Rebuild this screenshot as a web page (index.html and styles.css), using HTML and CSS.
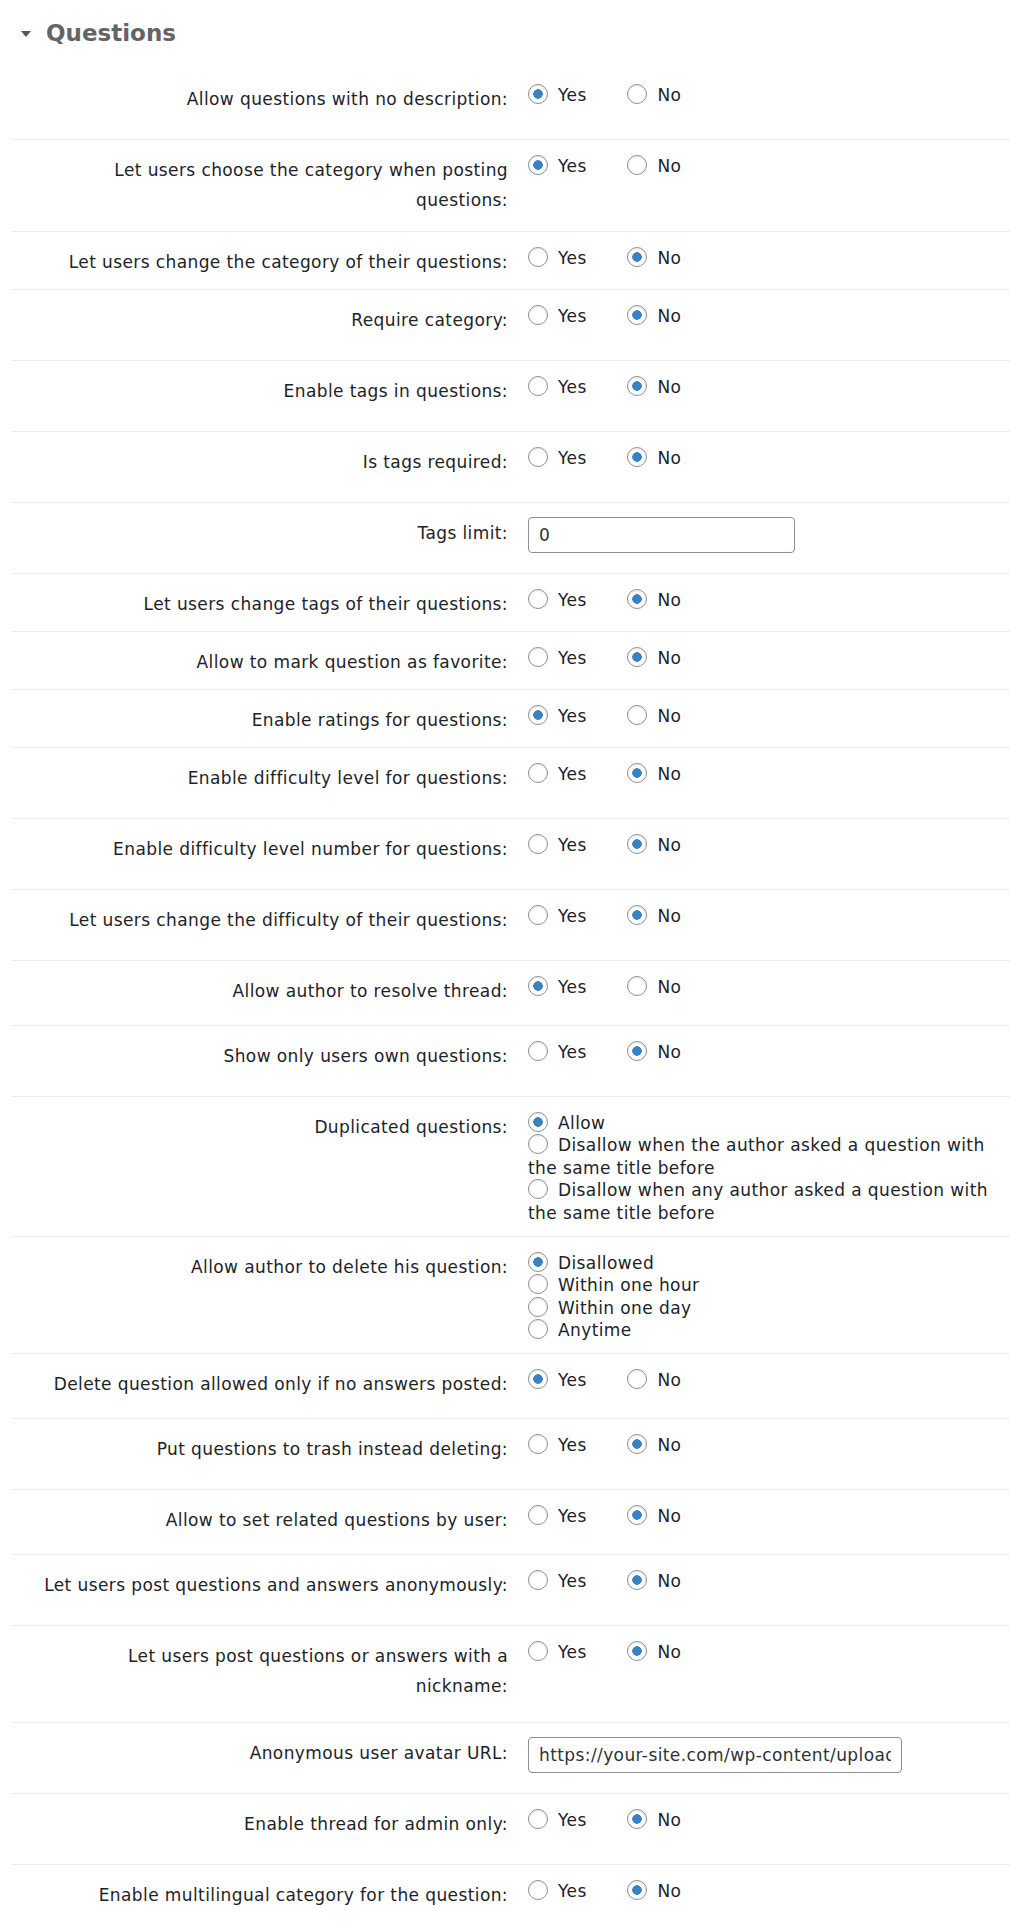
FILE: index.html
```html
<!DOCTYPE html>
<html lang="en">
<head>
    <meta charset="UTF-8">
    <title>Questions - Settings</title>
    <link rel="stylesheet" href="styles.css">
</head>
<body>
    <div class="section-title">
        <span class="toggle-arrow"></span>
        <h2>Questions</h2>
    </div>

    <div class="settings">
        <!-- Posting -->
        <div class="form-row">
            <label class="field-label">Allow questions with no description:</label>
            <div class="field-value">
                <label class="choice"><input type="radio" name="no_desc" checked>Yes</label>
                <label class="choice"><input type="radio" name="no_desc">No</label>
            </div>
        </div>
        <div class="form-row row-wrap">
            <label class="field-label">Let users choose the category when posting questions:</label>
            <div class="field-value">
                <label class="choice"><input type="radio" name="choose_cat" checked>Yes</label>
                <label class="choice"><input type="radio" name="choose_cat">No</label>
            </div>
        </div>
        <div class="form-row row-sm">
            <label class="field-label">Let users change the category of their questions:</label>
            <div class="field-value">
                <label class="choice"><input type="radio" name="change_cat">Yes</label>
                <label class="choice"><input type="radio" name="change_cat" checked>No</label>
            </div>
        </div>
        <div class="form-row">
            <label class="field-label">Require category:</label>
            <div class="field-value">
                <label class="choice"><input type="radio" name="req_cat">Yes</label>
                <label class="choice"><input type="radio" name="req_cat" checked>No</label>
            </div>
        </div>

        <!-- Tags -->
        <div class="form-row">
            <label class="field-label">Enable tags in questions:</label>
            <div class="field-value">
                <label class="choice"><input type="radio" name="tags">Yes</label>
                <label class="choice"><input type="radio" name="tags" checked>No</label>
            </div>
        </div>
        <div class="form-row">
            <label class="field-label">Is tags required:</label>
            <div class="field-value">
                <label class="choice"><input type="radio" name="tags_req">Yes</label>
                <label class="choice"><input type="radio" name="tags_req" checked>No</label>
            </div>
        </div>
        <div class="form-row">
            <label class="field-label" for="tags-limit">Tags limit:</label>
            <div class="field-value">
                <input type="text" id="tags-limit" class="text-input input-short" value="0">
            </div>
        </div>
        <div class="form-row row-sm">
            <label class="field-label">Let users change tags of their questions:</label>
            <div class="field-value">
                <label class="choice"><input type="radio" name="change_tags">Yes</label>
                <label class="choice"><input type="radio" name="change_tags" checked>No</label>
            </div>
        </div>

        <!-- Favorites, ratings, difficulty -->
        <div class="form-row row-sm">
            <label class="field-label">Allow to mark question as favorite:</label>
            <div class="field-value">
                <label class="choice"><input type="radio" name="favorite">Yes</label>
                <label class="choice"><input type="radio" name="favorite" checked>No</label>
            </div>
        </div>
        <div class="form-row row-sm">
            <label class="field-label">Enable ratings for questions:</label>
            <div class="field-value">
                <label class="choice"><input type="radio" name="ratings" checked>Yes</label>
                <label class="choice"><input type="radio" name="ratings">No</label>
            </div>
        </div>
        <div class="form-row">
            <label class="field-label">Enable difficulty level for questions:</label>
            <div class="field-value">
                <label class="choice"><input type="radio" name="difficulty">Yes</label>
                <label class="choice"><input type="radio" name="difficulty" checked>No</label>
            </div>
        </div>
        <div class="form-row">
            <label class="field-label">Enable difficulty level number for questions:</label>
            <div class="field-value">
                <label class="choice"><input type="radio" name="difficulty_num">Yes</label>
                <label class="choice"><input type="radio" name="difficulty_num" checked>No</label>
            </div>
        </div>
        <div class="form-row">
            <label class="field-label">Let users change the difficulty of their questions:</label>
            <div class="field-value">
                <label class="choice"><input type="radio" name="change_difficulty">Yes</label>
                <label class="choice"><input type="radio" name="change_difficulty" checked>No</label>
            </div>
        </div>
        <div class="form-row row-md">
            <label class="field-label">Allow author to resolve thread:</label>
            <div class="field-value">
                <label class="choice"><input type="radio" name="resolve" checked>Yes</label>
                <label class="choice"><input type="radio" name="resolve">No</label>
            </div>
        </div>
        <div class="form-row">
            <label class="field-label">Show only users own questions:</label>
            <div class="field-value">
                <label class="choice"><input type="radio" name="own_only">Yes</label>
                <label class="choice"><input type="radio" name="own_only" checked>No</label>
            </div>
        </div>

        <!-- Duplicates / deleting -->
        <div class="form-row row-list3">
            <label class="field-label">Duplicated questions:</label>
            <div class="field-value choice-list">
                <label><input type="radio" name="duplicates" checked>Allow</label>
                <label><input type="radio" name="duplicates">Disallow when the author asked a question with the same title before</label>
                <label><input type="radio" name="duplicates">Disallow when any author asked a question with the same title before</label>
            </div>
        </div>
        <div class="form-row row-list4">
            <label class="field-label">Allow author to delete his question:</label>
            <div class="field-value choice-list">
                <label><input type="radio" name="delete_own" checked>Disallowed</label>
                <label><input type="radio" name="delete_own">Within one hour</label>
                <label><input type="radio" name="delete_own">Within one day</label>
                <label><input type="radio" name="delete_own">Anytime</label>
            </div>
        </div>
        <div class="form-row row-md">
            <label class="field-label">Delete question allowed only if no answers posted:</label>
            <div class="field-value">
                <label class="choice"><input type="radio" name="delete_no_answers" checked>Yes</label>
                <label class="choice"><input type="radio" name="delete_no_answers">No</label>
            </div>
        </div>
        <div class="form-row">
            <label class="field-label">Put questions to trash instead deleting:</label>
            <div class="field-value">
                <label class="choice"><input type="radio" name="trash">Yes</label>
                <label class="choice"><input type="radio" name="trash" checked>No</label>
            </div>
        </div>
        <div class="form-row row-md">
            <label class="field-label">Allow to set related questions by user:</label>
            <div class="field-value">
                <label class="choice"><input type="radio" name="related">Yes</label>
                <label class="choice"><input type="radio" name="related" checked>No</label>
            </div>
        </div>

        <!-- Anonymous posting -->
        <div class="form-row">
            <label class="field-label">Let users post questions and answers anonymously:</label>
            <div class="field-value">
                <label class="choice"><input type="radio" name="anonymous">Yes</label>
                <label class="choice"><input type="radio" name="anonymous" checked>No</label>
            </div>
        </div>
        <div class="form-row row-wrap-lg">
            <label class="field-label">Let users post questions or answers with a nickname:</label>
            <div class="field-value">
                <label class="choice"><input type="radio" name="nickname">Yes</label>
                <label class="choice"><input type="radio" name="nickname" checked>No</label>
            </div>
        </div>
        <div class="form-row">
            <label class="field-label" for="avatar-url">Anonymous user avatar URL:</label>
            <div class="field-value">
                <input type="text" id="avatar-url" class="text-input input-long" value="https://your-site.com/wp-content/uploads/anonymous-avatar.png">
            </div>
        </div>
        <div class="form-row">
            <label class="field-label">Enable thread for admin only:</label>
            <div class="field-value">
                <label class="choice"><input type="radio" name="admin_only">Yes</label>
                <label class="choice"><input type="radio" name="admin_only" checked>No</label>
            </div>
        </div>
        <div class="form-row">
            <label class="field-label">Enable multilingual category for the question:</label>
            <div class="field-value">
                <label class="choice"><input type="radio" name="multilingual">Yes</label>
                <label class="choice"><input type="radio" name="multilingual" checked>No</label>
            </div>
        </div>
    </div>
</body>
</html>
```

FILE: styles.css
```css
/* General */
body {
    margin: 0;
    padding: 0;
    font-family: "DejaVu Sans", Verdana, sans-serif;
    font-size: 17px;
    letter-spacing: 0.4px;
    color: #1d2327;
    background: #fff;
}

/* Section heading */
.section-title {
    display: flex;
    align-items: center;
    gap: 15px;
    margin: 18px 0 21px 21px;
    height: 30px;
    letter-spacing: 0;
}

.toggle-arrow {
    width: 0;
    height: 0;
    border-left: 5px solid transparent;
    border-right: 5px solid transparent;
    border-top: 6px solid #555;
    margin-top: 1px;
}

.section-title h2 {
    margin: 0;
    font-size: 23px;
    line-height: 30px;
    font-weight: bold;
    color: #646464;
}

/* Settings table */
.settings {
    margin-left: 12px;
}

.form-row {
    display: grid;
    grid-template-columns: 496px 1fr;
    box-sizing: border-box;
    min-height: 71px;
    border-bottom: 1px solid #ececec;
}

.row-sm { min-height: 58px; }
.row-md { min-height: 65px; }
.row-wrap { min-height: 92px; }
.row-wrap-lg { min-height: 97px; }
.row-list3 { min-height: 140px; }
.row-list4 { min-height: 117px; }

.field-label {
    box-sizing: border-box;
    padding: 15px 0 0 31px;
    text-align: right;
    line-height: 30px;
}

.field-value {
    padding: 15px 10px 0 20px;
    line-height: 22.4px;
}

/* Radios */
input[type="radio"] {
    -webkit-appearance: none;
    appearance: none;
    box-sizing: border-box;
    display: inline-block;
    width: 20px;
    height: 20px;
    margin: 0 10px 0 0;
    vertical-align: -3px;
    border: 1px solid #8c8f94;
    border-radius: 50%;
    background: #fff;
    box-shadow: inset 0 1px 2px rgba(0, 0, 0, 0.1);
}

input[type="radio"]:checked {
    background: radial-gradient(circle, #3582c4 0 4.5px, #fff 5px);
}

.choice {
    margin-right: 35px;
}

.choice-list label {
    display: block;
}

/* Text inputs */
.text-input {
    display: block;
    box-sizing: border-box;
    height: 36px;
    margin-top: -1px;
    padding: 0 10px;
    border: 1px solid #8c8f94;
    border-radius: 4px;
    font-family: "DejaVu Sans", Verdana, sans-serif;
    font-size: 17px;
    letter-spacing: 0.4px;
    color: #2c3338;
    background: #fff;
}

.input-short { width: 267px; }
.input-long { width: 374px; }
```
